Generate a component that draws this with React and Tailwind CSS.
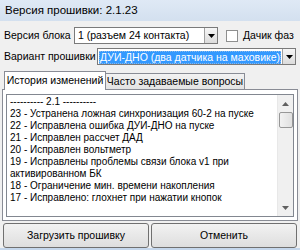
import React from 'react';

const lines = [
  '---------- 2.1 ----------',
  '23 - Устранена ложная синхронизация 60-2 на пуске',
  '22 - Исправлена ошибка ДУИ-ДНО на пуске',
  '21 - Исправлен рассчет ДАД',
  '20 - Исправлен вольтметр',
  '19 - Исправлены проблемы связи блока v1 при',
  'активированном БК',
  '18 - Ограничение мин. времени накопления',
  '17 - Исправлено: глохнет при нажатии кнопок',
];

function DropButton() {
  return (
    <div className="w-[13px] h-full border-l border-[#a0a0a0] bg-gradient-to-b from-[#f6f6f6] to-[#dcdcdc] flex items-center justify-center shrink-0">
      <svg width="7" height="4" viewBox="0 0 7 4">
        <path d="M0 0h7L3.5 4z" fill="#000" />
      </svg>
    </div>
  );
}

export default function App() {
  return (
    <div
      className="w-[300px] h-[250px] bg-[#f0f0f0] flex flex-col text-[10.5px] text-black overflow-hidden"
      style={{ fontFamily: '"Liberation Sans", Arial, sans-serif' }}
    >
      <div className="h-[21px] bg-gradient-to-b from-[#dfe9f5] to-[#d3e0ef] flex items-center pl-[5px] text-[11.5px]">
        Версия прошивки: 2.1.23
      </div>

      <div className="flex items-center h-[17px] mt-[6px] pl-[4px]">
        <span className="w-[70px] shrink-0 whitespace-nowrap">Версия блока</span>
        <div className="w-[144px] shrink-0 h-full border border-[#7a7a7a] bg-white flex items-center">
          <span className="flex-1 pl-[3px] whitespace-nowrap overflow-hidden">1 (разъем 24 контакта)</span>
          <DropButton />
        </div>
        <div className="ml-[8px] w-[12px] h-[12px] shrink-0 border border-[#8e8f8f] bg-white" />
        <span className="ml-[5px] whitespace-nowrap">Дачик фаз</span>
      </div>

      <div className="flex items-center h-[17px] mt-[4px] pl-[4px]">
        <span className="w-[93px] shrink-0 whitespace-nowrap">Вариант прошивки</span>
        <div className="w-[199px] shrink-0 h-full border border-[#7a7a7a] bg-white flex items-center">
          <div className="flex-1 h-full p-[1px] overflow-hidden">
            <span className="h-full inline-flex items-center bg-[#3399ff] text-white px-[1px] outline outline-1 outline-dotted outline-[#8ab7e8] -outline-offset-1 whitespace-nowrap">
              ДУИ-ДНО (два датчика на маховике)
            </span>
          </div>
          <DropButton />
        </div>
      </div>

      <div className="flex items-end h-[18px] mt-[6px] pl-[4px]">
        <div className="w-[102px] h-[19px] bg-white border border-b-0 border-[#898c95] flex items-center justify-center relative z-10 -mb-px whitespace-nowrap">
          История изменений
        </div>
        <div className="w-[139px] h-[16px] bg-gradient-to-b from-[#f2f2f2] to-[#e3e3e3] border border-l-0 border-b-0 border-[#898c95] flex items-center justify-center whitespace-nowrap">
          Часто задаваемые вопросы
        </div>
      </div>

      <div className="mx-[2px] h-[132px] bg-white border border-[#898c95] p-[3px] pt-[4px]">
        <div className="h-full border border-[#828790] flex">
          <div className="flex-1 pl-[3px] pt-[1px] leading-[12px] text-[10px] whitespace-nowrap overflow-hidden">
            {lines.map((l, i) => (
              <div key={i}>{l}</div>
            ))}
          </div>
          <div className="w-[16px] bg-[#f0f0f0] border-l border-[#e8e8e8] flex flex-col items-center">
            <div className="h-[17px] flex items-center justify-center">
              <svg width="7" height="4" viewBox="0 0 7 4">
                <path d="M0 4h7L3.5 0z" fill="#606060" />
              </svg>
            </div>
            <div className="w-[14px] h-[16px] border border-[#979797] rounded-[2px] bg-gradient-to-r from-[#f2f2f2] to-[#e0e0e0]" />
            <div className="flex-1" />
            <div className="h-[17px] flex items-center justify-center">
              <svg width="7" height="4" viewBox="0 0 7 4">
                <path d="M0 0h7L3.5 4z" fill="#606060" />
              </svg>
            </div>
          </div>
        </div>
      </div>

      <div className="flex gap-[2px] px-[3px] mt-[2px] h-[25px]">
        <button className="flex-1 border border-[#707070] rounded-[3px] bg-gradient-to-b from-[#f2f2f2] to-[#dedede]">
          Загрузить прошивку
        </button>
        <button className="flex-1 border border-[#707070] rounded-[3px] bg-gradient-to-b from-[#f2f2f2] to-[#dedede]">
          Отменить
        </button>
      </div>
      <div className="flex-1" />
      <div className="h-[2px] bg-[#c5d7ec]" />
    </div>
  );
}
